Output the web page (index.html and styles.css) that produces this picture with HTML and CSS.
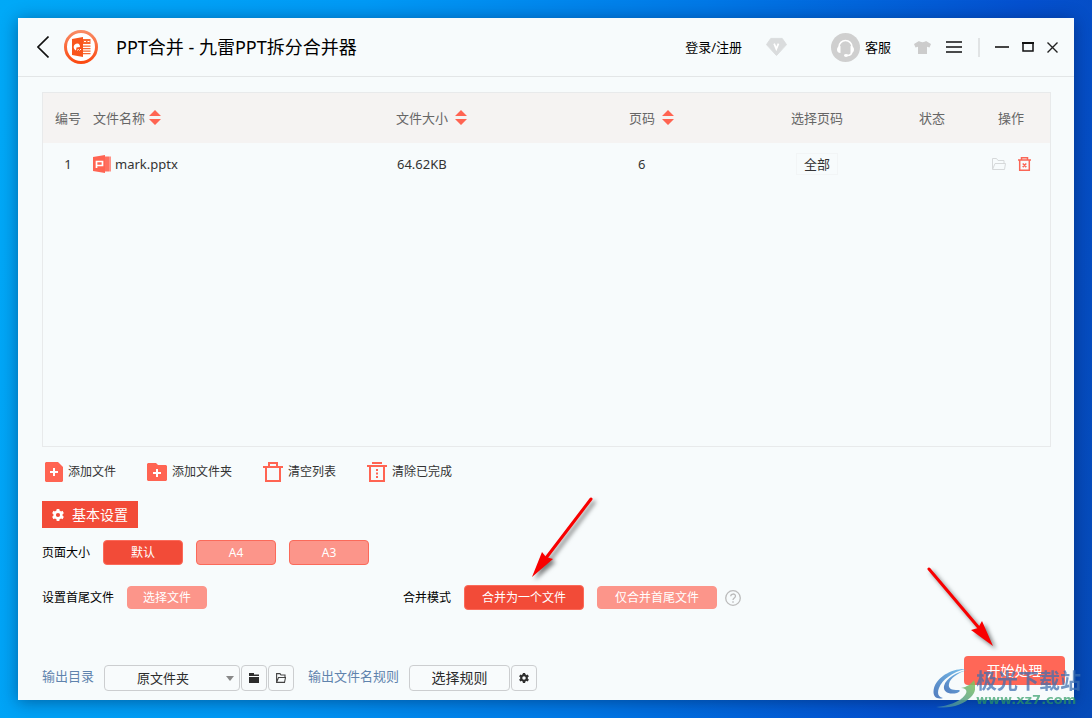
FILE: index.html
```html
<!DOCTYPE html>
<html lang="zh-CN">
<head>
<meta charset="utf-8">
<title>PPT合并 - 九雷PPT拆分合并器</title>
<link rel="stylesheet" href="styles.css">
</head>
<body>
<svg class="defs" width="0" height="0" aria-hidden="true">
  <symbol id="sort" viewBox="0 0 12 16"><path d="M6 0 12 6H0zM0 9h12l-6 6z" fill="#ff6452"/></symbol>
  <symbol id="gear" viewBox="0 0 12 12"><circle cx="6" cy="6" r="3.400" fill="none" stroke="currentColor" stroke-width="2.600"/><path d="M6 0v2M6 10v2M.8 3l1.700 1M9.500 8l1.700 1M.8 9l1.700-1M9.500 4l1.700-1" stroke="currentColor" stroke-width="2.800"/></symbol>
</svg>
<main class="window">
  <header class="titlebar">
    <button class="plain" aria-label="返回"><svg width="12" height="22" viewBox="0 0 12 22"><path d="M11.500.5 1 11l10.500 10.500" fill="none" stroke="#111" stroke-width="1.600"/></svg></button>
    <svg class="logo" width="34" height="34" viewBox="0 0 34 34">
      <defs><linearGradient id="ring" x1="0" y1="0" x2="0" y2="1"><stop offset="0" stop-color="#f98a63"/><stop offset="1" stop-color="#fb4a12"/></linearGradient></defs>
      <circle cx="17" cy="17" r="15.500" fill="#fff" stroke="url(#ring)" stroke-width="3"/>
      <path d="M8 9l11-2v20L8 25z" fill="#f9551d"/>
      <path d="M19 9h7.500v5H19zM19 15.500h7.500v1.300H19zM19 18h7.500v1.300H19zM19 20.500h7.500v1.300H19zM19 23h7.500v1.300H19z" fill="#f9682f"/>
      <path d="M20 11.500h2M23.500 11.500h2" stroke="#fff"/>
      <path d="M13.500 13.500c-4.500 0-5 5.500-1.500 7l.5-3 3.500-.5c0-2-.8-3.500-2.500-3.500z" fill="#fff"/>
      <path d="M13.500 20.500l1-1.500M15.500 20.500l1.500-1.500" stroke="#fff"/>
    </svg>
    <h1>PPT合并 - 九雷PPT拆分合并器</h1>
    <a class="login" href="#">登录/注册</a>
    <button class="plain vip" aria-label="会员"><svg width="21" height="20" viewBox="0 0 22 20"><path d="M5 1h12l4.500 6.500L11 19 .5 7.500z" fill="#dadcdd" stroke="#dadcdd" stroke-linejoin="round"/><path d="M8.500 6.500l2.300 5.500 2.300-5.500" fill="none" stroke="#fff" stroke-width="1.800"/></svg></button>
    <a class="service" href="#"><svg width="29" height="29" viewBox="0 0 29 29"><circle cx="14.500" cy="14.500" r="14.500" fill="#cfcfcf"/><path d="M8 15v-1a6.500 6.500 0 0 1 13 0v4c0 3-2 4.500-5 4.500" fill="none" stroke="#fff" stroke-width="1.600"/><path d="M9.500 13v7C7 20 6 18.500 6 16.500S7.500 13 9.500 13zM19.500 13v7c2.500 0 3.500-1.500 3.500-3.500S21.500 13 19.500 13z" fill="#fff"/><ellipse cx="15" cy="22.500" rx="2" ry="1.400" fill="#fff"/></svg>客服</a>
    <button class="plain skin" aria-label="换肤"><svg width="17" height="13" viewBox="0 0 17 13"><path d="M5 0c1.500 1.500 5.500 1.500 7 0l5 3-1.500 3.500-2.500-.7V13H4V5.800l-2.500.7L0 3z" fill="#ccc"/></svg></button>
    <button class="plain menu" aria-label="菜单"><svg width="16" height="12" viewBox="0 0 16 12"><path d="M0 1h16M0 6h16M0 11h16" stroke="#111" stroke-width="1.600"/></svg></button>
    <span class="divider"></span>
    <button class="plain" aria-label="最小化"><svg width="14" height="12" viewBox="0 0 14 12"><path d="M0 6h14" stroke="#444" stroke-width="2"/></svg></button>
    <button class="plain" aria-label="最大化"><svg width="12" height="10" viewBox="0 0 12 10"><path d="M1 1h10v8H1z" fill="none" stroke="#111" stroke-width="1.500"/><path d="M0 1h12" stroke="#111" stroke-width="2"/></svg></button>
    <button class="plain" aria-label="关闭"><svg width="11" height="11" viewBox="0 0 11 11"><path d="M.5.5l10 10M10.500.5l-10 10" stroke="#222" stroke-width="1.400"/></svg></button>
  </header>

  <section class="filelist">
    <table>
      <colgroup><col class="c-no"><col><col class="c-size"><col class="c-page"><col class="c-range"><col class="c-state"><col class="c-ops"></colgroup>
      <thead><tr>
        <th class="mid">编号</th>
        <th><span class="sortable">文件名称<svg width="12" height="16"><use href="#sort"/></svg></span></th>
        <th><span class="sortable wide">文件大小<svg width="12" height="16"><use href="#sort"/></svg></span></th>
        <th><span class="sortable wide">页码<svg width="12" height="16"><use href="#sort"/></svg></span></th>
        <th class="mid">选择页码</th><th class="mid">状态</th><th class="mid">操作</th>
      </tr></thead>
      <tbody><tr>
        <td class="mid">1</td>
        <td><span class="file"><svg width="18" height="18" viewBox="0 0 18 18"><path d="M0 2l12-2v18L0 16z" fill="#ff6452"/><path d="M12 1.500h4v15h-4z" fill="#ff6f60"/><path d="M16 1.500h2v15h-2z" fill="#ff9286"/><path d="M3.500 13V6.500h6v4H4" fill="none" stroke="#fff" stroke-width="1.700"/></svg>mark.pptx</span></td>
        <td class="bytes">64.62KB</td>
        <td class="pages">6</td>
        <td class="mid"><button class="range">全部</button></td>
        <td></td>
        <td><span class="ops">
          <button class="plain" aria-label="打开文件夹"><svg width="14" height="12" viewBox="0 0 14 12"><path d="M.5 11V.5h4l1.500 2h6V5M.5 11.500l2.500-6h10.500l-1 6z" fill="none" stroke="#d6d9da"/></svg></button>
          <button class="plain" aria-label="删除"><svg width="13" height="14" viewBox="0 0 13 14"><path d="M0 3h13M3.500 3V.7h6V3M1.700 3v10.300h9.600V3M4.700 6.500l3.600 3.600M8.300 6.500l-3.600 3.600" fill="none" stroke="#fa6656" stroke-width="1.500"/></svg></button>
        </span></td>
      </tr></tbody>
    </table>
  </section>

  <nav class="toolbar">
    <button class="tool"><svg width="18" height="20" viewBox="0 0 18 20"><path d="M1 0h12l5 5v14l-1 1H1l-1-1V1z" fill="#ff6452"/><path d="M9 6v8M5 10h8" stroke="#fff" stroke-width="2"/></svg>添加文件</button>
    <button class="tool"><svg width="20" height="18" viewBox="0 0 20 18"><path d="M1 0h8l2 2h8l1 1v14l-1 1H1l-1-1V1z" fill="#ff6452"/><path d="M10 6v8M6 10h8" stroke="#fff" stroke-width="2"/></svg>添加文件夹</button>
    <button class="tool"><svg width="20" height="20" viewBox="0 0 20 20"><path d="M0 5h20M6 5V1h8v4M3 5v14h14V5" fill="none" stroke="#ff6452" stroke-width="2"/></svg>清空列表</button>
    <button class="tool"><svg width="20" height="20" viewBox="0 0 20 20"><path d="M0 4h20M5 1h10M3 4v15h14V4" fill="none" stroke="#ff6452" stroke-width="2"/><path d="M10 7v9" stroke="#ff6452" stroke-width="2" stroke-dasharray="2 1.500"/></svg>清除已完成</button>
  </nav>

  <h2 class="tag"><svg width="12" height="12"><use href="#gear"/></svg>基本设置</h2>

  <div class="row sizes">
    <span class="label">页面大小</span>
    <button class="opt on">默认</button><button class="opt">A4</button><button class="opt">A3</button>
  </div>
  <div class="modes">
    <div class="row"><span class="label">设置首尾文件</span><button class="opt flat">选择文件</button></div>
    <div class="row"><span class="label">合并模式</span>
      <span class="anchor"><button class="opt on long">合并为一个文件</button>
        <svg class="arrow left" width="68" height="84" viewBox="0 0 68 84" aria-hidden="true"><path d="M61 3 16 62" stroke="#f80000" stroke-width="3" stroke-linecap="round"/><path d="M2 81 12 56l4 5 7 2z" fill="#f80000"/></svg></span>
      <button class="opt flat long">仅合并首尾文件</button>
      <button class="plain help" aria-label="帮助"><svg width="16" height="16" viewBox="0 0 16 16"><circle cx="8" cy="8" r="7.300" fill="none" stroke="#bbb" stroke-width="1.300"/><path d="M5.700 6.300c0-3 4.800-3 4.800-.2C10.500 8 8 8 8 10" fill="none" stroke="#bbb" stroke-width="1.300"/><path d="M8 11.300v1.400" stroke="#bbb" stroke-width="1.400"/></svg></button>
    </div>
  </div>

  <footer class="output">
    <label for="dir">输出目录</label>
    <span class="anchor"><select id="dir" class="box"><option>原文件夹</option></select><svg class="caret" width="8" height="5" viewBox="0 0 8 5"><path d="M0 0h8L4 5z" fill="#888"/></svg></span>
    <button class="box icon" aria-label="选择目录"><svg width="10" height="10" viewBox="0 0 10 10"><path d="M0 0h5v1.500h5V3H0zM0 4h10v6H0z" fill="#2c2c2c"/></svg></button>
    <button class="box icon" aria-label="打开目录"><svg width="10" height="10" viewBox="0 0 10 10"><path d="M.6 9V.6h3.400l1 1.400h4v2M.6 9.400 2.500 4.500h7l-1 4.900z" fill="none" stroke="#444" stroke-width="1.100"/></svg></button>
    <label for="rule" class="second">输出文件名规则</label>
    <button class="box rule" id="rule">选择规则</button>
    <button class="box icon" aria-label="规则设置"><svg width="10" height="10"><use href="#gear"/></svg></button>
    <span class="anchor start-wrap"><button class="start">开始处理</button>
      <svg class="arrow right" width="76" height="88" viewBox="0 0 76 88" aria-hidden="true"><path d="M2 3 52 62" stroke="#f80000" stroke-width="3" stroke-linecap="round"/><path d="M66 80 44 64l7-2 4-7z" fill="#f80000"/></svg></span>
  </footer>
</main>
<div class="watermark">
  <svg width="42" height="41" viewBox="0 0 42 41">
    <defs><linearGradient id="wb" x1="1" y1="0" x2="0" y2="1"><stop offset="0" stop-color="#62b5e8"/><stop offset="1" stop-color="#3567b4"/></linearGradient><linearGradient id="wg" x1="0" y1="1" x2="1" y2="0"><stop offset="0" stop-color="#387fb4"/><stop offset="1" stop-color="#83c957"/></linearGradient></defs>
    <path d="M33 1C19 0 4 9 1 20c-2 8 2 12 9 10-5-1-6-5-4-10C9 12 19 4 33 1z" fill="url(#wb)"/>
    <path d="M34 2C24 4 13 10 11 18c-1 6 5 9 13 7 3-1 4-3 1-3-6 0-10-1-9-6 1-6 9-11 18-14z" fill="url(#wb)"/>
    <path d="M41 12c2 6 2 12-3 17-8 8-21 12-35 10 12-1 24-5 29-12 3-4 1-7-4-7 6-1 10-4 13-8z" fill="url(#wg)"/>
  </svg>
  <div><span class="wm-name">极光下载站</span><span class="wm-url">www.xz7.com</span></div>
</div>
</body>
</html>
```

FILE: styles.css
```css
* { box-sizing: border-box; }
body {
  margin: 0;
  padding: 18px;
  min-height: 100vh;
  display: flex;
  position: relative;
  overflow: hidden;
  font: 13px/20px "Noto Sans", "Noto Sans CJK SC", sans-serif;
  color: #333;
  background: linear-gradient(100deg, #00a9f7 0%, #0099f5 30%, #0078e6 58%, #0450cf 84%, #064bb8 100%);
}
button, select { font: inherit; color: inherit; }
svg { display: block; flex: none; }
a { color: inherit; text-decoration: none; }
.defs { position: absolute; }
.window {
  flex: 1;
  display: flex;
  flex-direction: column;
  background: #f7fbfc;
  box-shadow: 0 2px 16px rgba(0, 20, 60, .45);
}
.plain { border: 0; padding: 0; background: none; }
.anchor { position: relative; display: flex; }

.titlebar {
  display: flex;
  align-items: center;
  height: 59px;
  padding: 0 16px 0 19px;
  gap: 13px;
  border-bottom: 1px solid #e3e6e7;
  color: #000;
}
.logo { margin-left: 2px; }
.titlebar h1 { flex: 1; margin: 0 0 0 5px; font-size: 18px; font-weight: 400; line-height: 26px; }
.login { margin-right: 11px; }
.vip { margin-right: 31px; }
.service { display: flex; align-items: center; gap: 5px; margin-right: 10px; }
.skin { margin-right: 2px; }
.menu { margin-right: 1px; }
.divider { width: 2px; height: 19px; background: #e1e4e5; margin: 0 2px; }

.filelist {
  flex: 1;
  margin: 15px 23px 0 24px;
  border: 1px solid #e8eaeb;
}
table { width: 100%; table-layout: fixed; border-collapse: collapse; }
.c-no { width: 50px; }
.c-size { width: 233px; }
.c-page { width: 113px; }
.c-range { width: 150px; }
.c-state { width: 80px; }
.c-ops { width: 78px; }
th { height: 50px; padding: 0; background: #f5f3f2; color: #666; font-weight: 400; text-align: left; }
td { height: 42px; padding: 0; }
.mid { text-align: center; }
.sortable { display: flex; align-items: center; gap: 4px; }
.wide { gap: 7px; }
.file { display: flex; align-items: center; gap: 4px; }
.bytes { padding-left: 1px; }
.pages { padding-left: 9px; }
.range { border: 1px solid #f2f5f6; background: none; padding: 0 7px; }
.ops { display: flex; align-items: center; justify-content: center; gap: 12px; }

.toolbar { display: flex; align-items: center; gap: 31px; height: 50px; padding: 0 27px; }
.tool { display: flex; align-items: center; gap: 5px; padding: 0; border: 0; background: none; font-size: 12px; }

.tag {
  display: flex;
  align-items: center;
  align-self: flex-start;
  gap: 8px;
  height: 27px;
  margin: 4px 24px 12px;
  padding: 0 10px;
  background: #f24b38;
  color: #fff;
  font-size: 14px;
  font-weight: 400;
}
.row { display: flex; align-items: center; gap: 13px; height: 25px; font-size: 12px; color: #000; }
.sizes { margin: 0 24px 20px; }
.modes { display: grid; grid-template-columns: 361px 1fr; margin: 0 24px 46px; }
.opt {
  width: 80px;
  height: 25px;
  padding: 0;
  border: 1px solid #fb6a5a;
  border-radius: 4px;
  background: #fc958a;
  color: #fff;
}
.on { background: #f24b38; }
.flat { height: 23px; border-color: #fc958a; }
.long { width: 120px; }
.help { margin-left: -5px; }

.output {
  display: flex;
  align-items: flex-end;
  min-height: 44px;
  padding: 0 9px 9px 24px;
  gap: 1px;
  color: #5f83ad;
}
.output label { margin: 0 9px 5px 0; }
.output .second { margin-left: 13px; }
.box {
  height: 26px;
  border: 1px solid #ccced0;
  border-radius: 4px;
  background: #f8fbfc;
  color: #2c2c2c;
  padding: 0;
}
select.box { width: 136px; appearance: none; text-align: center; text-align-last: center; padding-right: 18px; }
.caret { position: absolute; right: 6px; top: 11px; }
.icon { width: 26px; display: grid; place-items: center; }
.rule { width: 101px; font-size: 14px; }
.start-wrap { margin-left: auto; align-self: flex-start; }
.start { width: 101px; height: 29px; border: 0; border-radius: 4px; background: #ff6757; color: #fff; font-size: 14px; }

.arrow { position: absolute; pointer-events: none; filter: drop-shadow(3px 3px 2px rgba(0, 0, 0, .5)); }
.left { left: 66px; bottom: 30px; }
.right { right: 62px; bottom: 31px; }

.watermark { position: absolute; right: 11px; bottom: 9px; display: flex; gap: 1px; opacity: .85; pointer-events: none; }
.watermark span { display: block; white-space: nowrap; }
.wm-name { font: 700 21px/23px "Noto Sans CJK SC", sans-serif; color: #3b6fb0; opacity: .85; }
.wm-url { font: 700 13px/17px "DejaVu Sans", sans-serif; color: #2c9a62; opacity: .8; }
```
